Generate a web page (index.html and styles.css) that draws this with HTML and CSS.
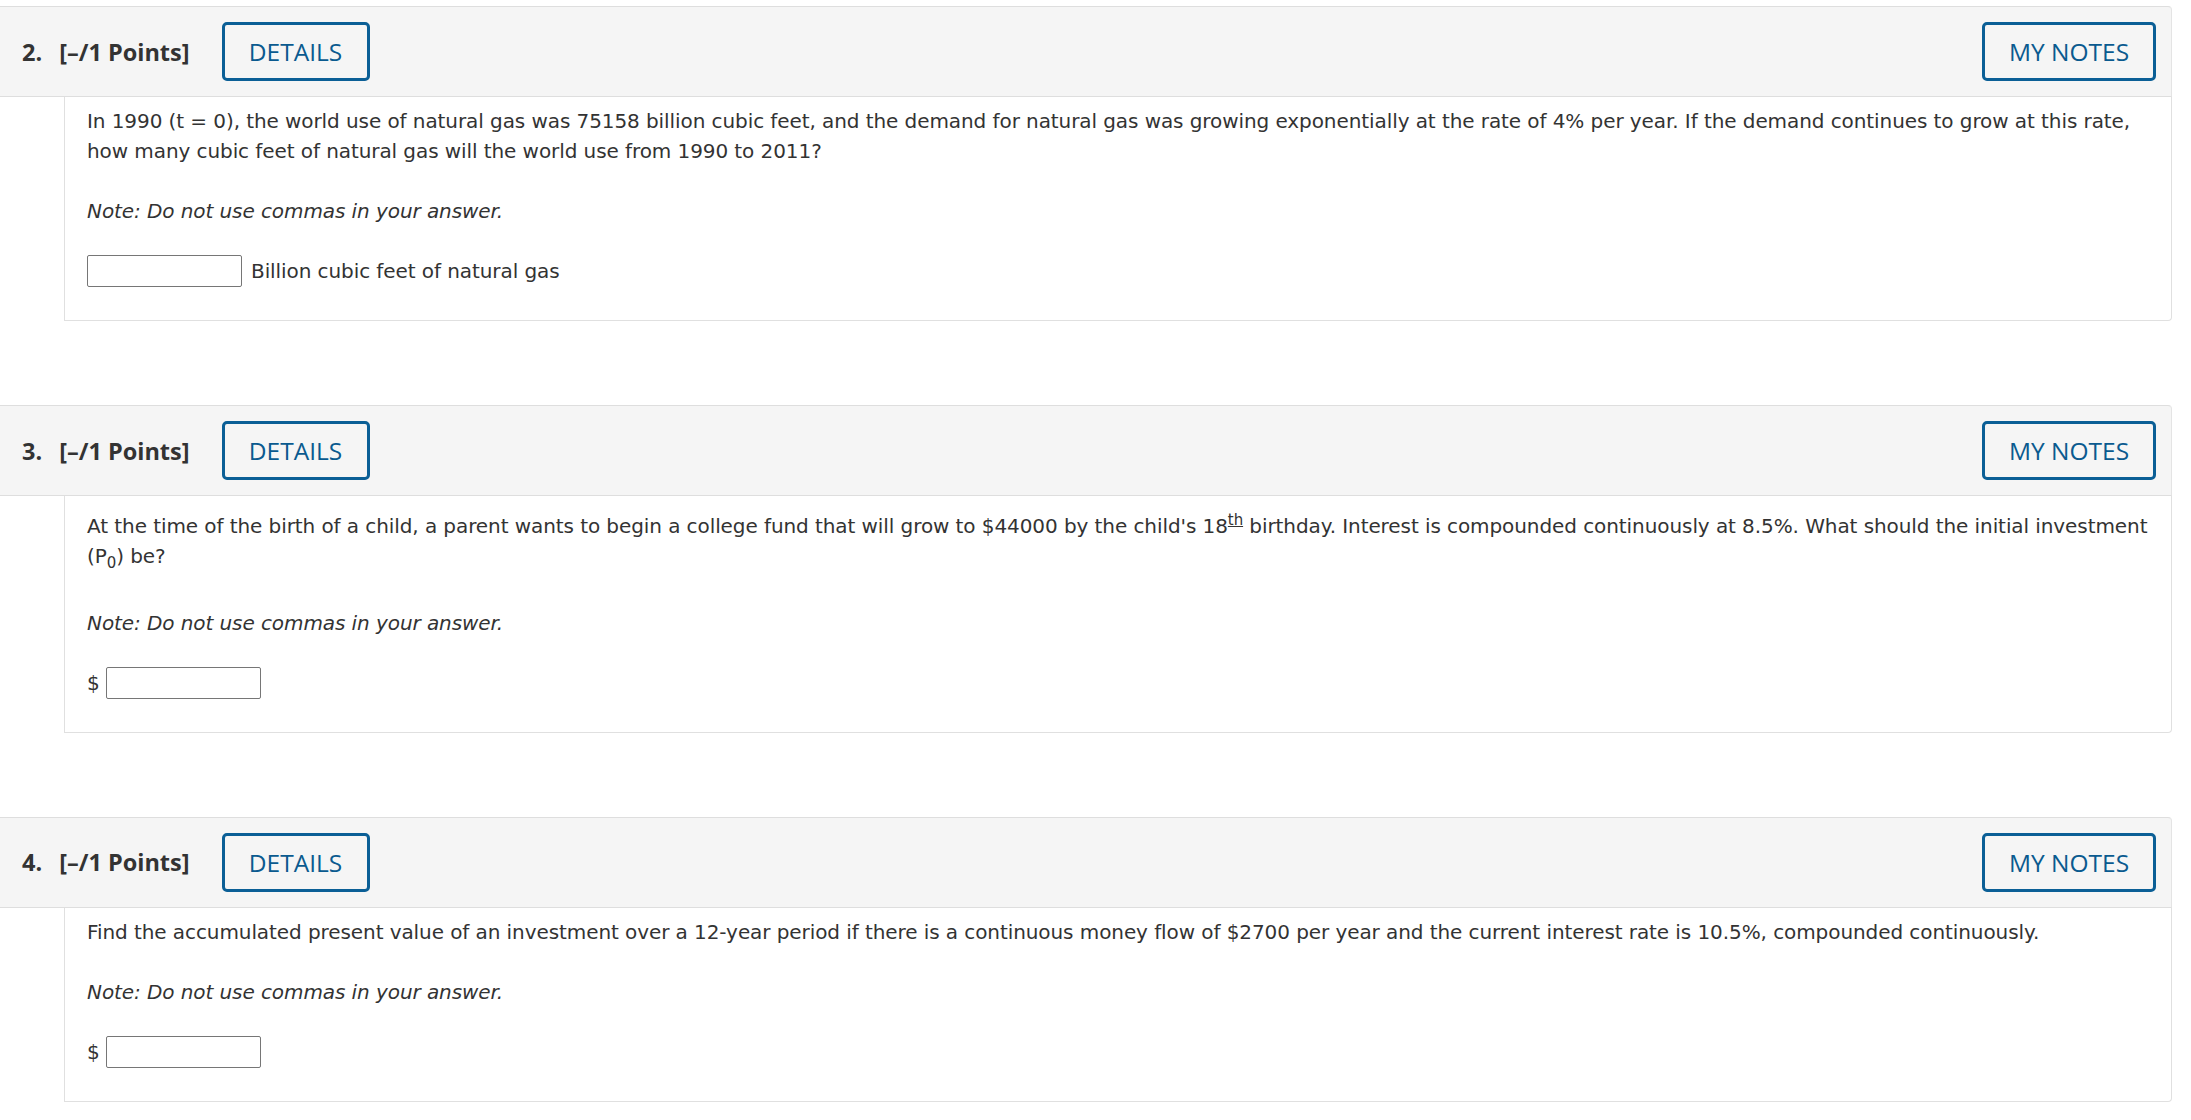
FILE: index.html
```html
<!DOCTYPE html>
<html lang="en">
<head>
<meta charset="utf-8">
<title>Questions</title>
<link rel="stylesheet" href="styles.css">
</head>
<body>
<div class="page">

  <div class="question">
    <div class="q-header">
      <span class="q-num">2.</span>
      <span class="q-points">[–/1 Points]</span>
      <button class="btn btn-details">DETAILS</button>
      <span class="spacer"></span>
      <button class="btn btn-notes">MY NOTES</button>
    </div>
    <div class="q-body">
      <p class="q-text">In 1990 (t = 0), the world use of natural gas was 75158 billion cubic feet, and the demand for natural gas was growing exponentially at the rate of 4% per year. If the demand continues to grow at this rate, how many cubic feet of natural gas will the world use from 1990 to 2011?</p>
      <p class="q-note">Note: Do not use commas in your answer.</p>
      <div class="answer">
        <input class="answer-input" type="text">
        <span class="unit">Billion cubic feet of natural gas</span>
      </div>
    </div>
  </div>

  <div class="question">
    <div class="q-header">
      <span class="q-num">3.</span>
      <span class="q-points">[–/1 Points]</span>
      <button class="btn btn-details">DETAILS</button>
      <span class="spacer"></span>
      <button class="btn btn-notes">MY NOTES</button>
    </div>
    <div class="q-body">
      <p class="q-text">At the time of the birth of a child, a parent wants to begin a college fund that will grow to $44000 by the child's 18<sup class="ord">th</sup> birthday. Interest is compounded continuously at 8.5%. What should the initial investment (P<sub class="idx">0</sub>) be?</p>
      <p class="q-note">Note: Do not use commas in your answer.</p>
      <div class="answer">
        <span class="currency">$</span>
        <input class="answer-input" type="text">
      </div>
    </div>
  </div>

  <div class="question">
    <div class="q-header">
      <span class="q-num">4.</span>
      <span class="q-points">[–/1 Points]</span>
      <button class="btn btn-details">DETAILS</button>
      <span class="spacer"></span>
      <button class="btn btn-notes">MY NOTES</button>
    </div>
    <div class="q-body">
      <p class="q-text">Find the accumulated present value of an investment over a 12-year period if there is a continuous money flow of $2700 per year and the current interest rate is 10.5%, compounded continuously.</p>
      <p class="q-note">Note: Do not use commas in your answer.</p>
      <div class="answer">
        <span class="currency">$</span>
        <input class="answer-input" type="text">
      </div>
    </div>
  </div>

</div>
</body>
</html>
```
FILE: styles.css
```css
html, body {
  margin: 0;
  padding: 0;
  background: #ffffff;
}

.page {
  width: 2172px;
  padding-top: 6px;
}

.question {
  margin-bottom: 84px;
}

.question:last-child {
  margin-bottom: 0;
}

.q-header {
  display: flex;
  align-items: center;
  background: #f5f5f5;
  border-top: 1px solid #dedede;
  border-bottom: 1px solid #dedede;
  border-right: 1px solid #e4e4e4;
  border-top-right-radius: 4px;
  padding: 15px 15px 15px 22px;
  font-family: "Open Sans", "Noto Sans", sans-serif;
}

.q-num {
  font-weight: 700;
  font-size: 23.5px;
  color: #333333;
  margin-right: 17px;
}

.q-points {
  font-weight: 700;
  font-size: 23.5px;
  color: #333333;
  margin-right: 32px;
}

.spacer {
  flex: 1;
}

.btn {
  box-sizing: border-box;
  height: 59px;
  background: transparent;
  border: 3px solid #0b5f96;
  border-radius: 5px;
  color: #0a5a8f;
  font-family: "Open Sans", "Noto Sans", sans-serif;
  font-size: 24.5px;
  font-weight: 400;
  padding: 0;
  margin: 0;
  cursor: pointer;
}

.btn-details {
  width: 148px;
}

.btn-notes {
  width: 174px;
}

.q-body {
  margin-left: 64px;
  border-left: 1px solid #e0e0e0;
  border-right: 1px solid #e0e0e0;
  border-bottom: 1px solid #e0e0e0;
  border-bottom-right-radius: 4px;
  padding: 9px 8px 33px 22px;
  font-family: "DejaVu Sans", Verdana, sans-serif;
  font-size: 20px;
  line-height: 30px;
  letter-spacing: -0.08px;
  color: #333333;
}

.q-text {
  margin: 0 0 30px 0;
}

.q-note {
  margin: 0 0 29px 0;
  font-style: italic;
}

.ord {
  font-size: 15px;
  text-decoration: underline;
}

.idx {
  font-size: 15px;
}

.answer {
  display: flex;
  align-items: center;
  height: 32px;
}

.answer-input {
  box-sizing: border-box;
  width: 155px;
  height: 32px;
  border: 1px solid #767676;
  border-radius: 2px;
  background: #ffffff;
  margin: 0;
  padding: 0 4px;
}

.unit {
  margin-left: 9px;
}

.currency {
  margin-right: 6px;
}
```
